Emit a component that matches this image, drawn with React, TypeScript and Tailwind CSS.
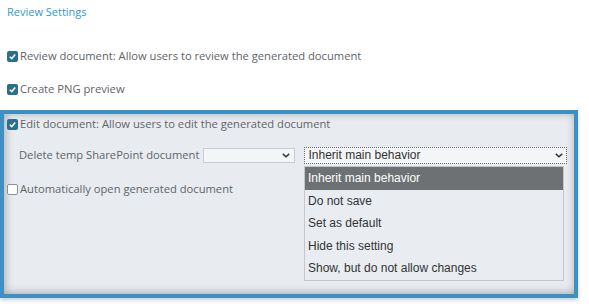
import { useState } from 'react';

const opcoes = [
  'Inherit main behavior',
  'Do not save',
  'Set as default',
  'Hide this setting',
  'Show, but do not allow changes',
];

function Caixa({ marcada }: { marcada: boolean }) {
  if (!marcada) {
    return <span className="inline-block w-[11px] h-[11px] border border-[#8a8f94] rounded-[2px] bg-white shrink-0" />;
  }
  return (
    <span className="inline-flex items-center justify-center w-[11px] h-[11px] rounded-[2px] bg-[#2b6f8c] shrink-0">
      <svg viewBox="0 0 10 10" className="w-[9px] h-[9px]">
        <path d="M2 5.2 L4.2 7.3 L8 2.8" fill="none" stroke="white" strokeWidth="1.7" />
      </svg>
    </span>
  );
}

function Chevron() {
  return (
    <svg viewBox="0 0 10 6" className="w-[8px] h-[5px]">
      <path d="M1 1 L5 4.5 L9 1" fill="none" stroke="#333" strokeWidth="1.8" />
    </svg>
  );
}

export default function App() {
  const [selecionada] = useState(0);

  return (
    <div className="w-[589px] h-[307px] bg-white overflow-hidden whitespace-nowrap text-[#5f6468] text-[11.2px] font-['Segoe_UI','Open_Sans',sans-serif]">
      {/* Cabeçalho */}
      <div className="pl-[7px] pt-[4px] h-[20px] text-[11px] text-[#2f9ad6]">Review Settings</div>

      <div className="pl-[7px] mt-[26px] flex items-center gap-[2px] h-[20px]">
        <Caixa marcada />
        <span>Review document: Allow users to review the generated document</span>
      </div>
      <div className="pl-[7px] mt-[13px] flex items-center gap-[2px] h-[20px]">
        <Caixa marcada />
        <span>Create PNG preview</span>
      </div>

      {/* Área destacada */}
      <div className="relative mt-[11px] w-[578px] h-[188px] border-[4px] border-[#3d90c4] bg-[#e8ecf0] shadow-[inset_1px_-1px_8px_rgba(0,0,0,0.3),0_2px_4px_rgba(0,0,0,0.2)]">
        <div className="pl-[3px] flex items-center gap-[2px] h-[20px]">
          <Caixa marcada />
          <span>Edit document: Allow users to edit the generated document</span>
        </div>

        <div className="flex items-center mt-[12px] h-[18px]">
          <span className="pl-[15px]">Delete temp SharePoint document</span>
          <div className="ml-[4px] w-[92px] h-[15px] border border-[#c9cdd1] bg-[#f3f5f7] flex items-center justify-end pr-[4px]">
            <Chevron />
          </div>
          <div className="ml-[9px] w-[263px] h-[17px] border border-dotted border-[#6a6a6a] bg-[#f3f5f7] flex items-center justify-between px-[3px] font-['Liberation_Sans',Arial,sans-serif] text-[12px] text-[#333]">
            <span>Inherit main behavior</span>
            <Chevron />
          </div>
        </div>

        <div className="pl-[3px] mt-[15px] flex items-center gap-[2px] h-[20px]">
          <Caixa marcada={false} />
          <span>Automatically open generated document</span>
        </div>

        {/* Lista aberta do select */}
        <div className="absolute left-[300px] top-[52px] w-[260px] border border-[#c4c8cc] bg-[#e9edf1] font-['Liberation_Sans',Arial,sans-serif] text-[12px] text-[#333]">
          {opcoes.map((o, i) => (
            <div
              key={o}
              className={`h-[22.5px] flex items-center pl-[3px] ${i === selecionada ? 'bg-[#6d7174] text-white' : ''}`}
            >
              {o}
            </div>
          ))}
        </div>
      </div>
    </div>
  );
}
